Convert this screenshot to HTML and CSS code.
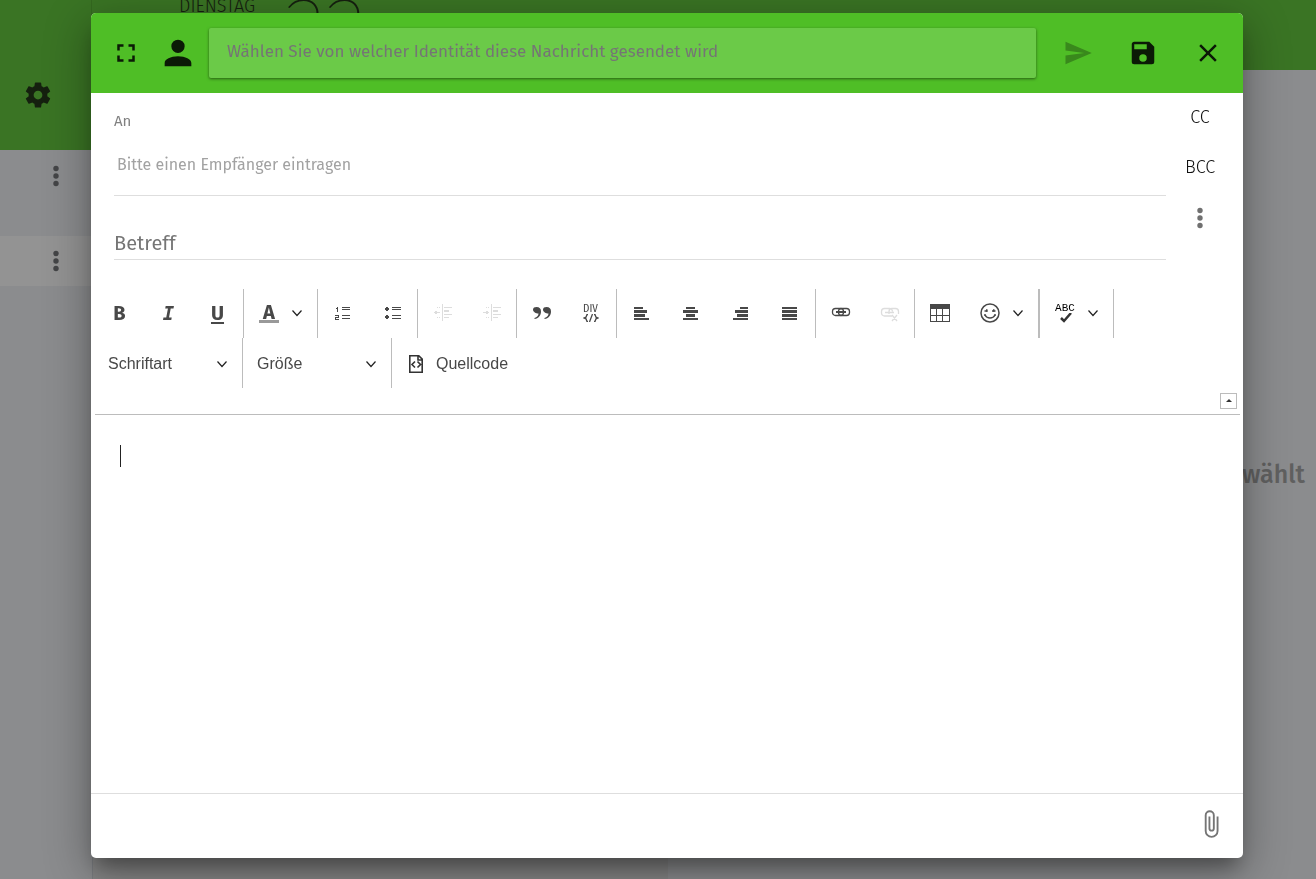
FILE: index.html
```html
<!DOCTYPE html>
<html lang="de">
<head>
<meta charset="utf-8">
<meta name="viewport" content="width=device-width, initial-scale=1">
<title>Neue Nachricht</title>
<link rel="stylesheet" href="styles.css">
</head>
<body>
<svg class="defs" aria-hidden="true">
  <symbol id="chevron" viewBox="0 0 12 12"><path d="M1.500 3.500 6 8.500 10.500 3.500" fill="none" stroke="#222" stroke-width="1.200"/></symbol>
  <symbol id="dots" viewBox="0 0 6 22"><circle cx="3" cy="3.500" r="2.700"/><circle cx="3" cy="11" r="2.700"/><circle cx="3" cy="18.500" r="2.700"/></symbol>
</svg>
<div class="app">
  <aside class="side">
    <div class="side-head">
      <button class="plain" aria-label="Einstellungen"><svg class="i30" viewBox="0 0 24 24" fill="#15200f"><path d="M12,15.5A3.5,3.5 0 0,1 8.5,12A3.5,3.5 0 0,1 12,8.5A3.5,3.5 0 0,1 15.5,12A3.5,3.5 0 0,1 12,15.5M19.43,12.97C19.47,12.65 19.5,12.33 19.5,12C19.5,11.67 19.47,11.34 19.43,11L21.54,9.37C21.73,9.22 21.78,8.95 21.66,8.73L19.66,5.27C19.54,5.05 19.27,4.96 19.05,5.05L16.56,6.05C16.04,5.66 15.5,5.32 14.87,5.07L14.5,2.42C14.46,2.18 14.25,2 14,2H10C9.75,2 9.54,2.18 9.5,2.42L9.13,5.07C8.5,5.32 7.96,5.66 7.44,6.05L4.95,5.05C4.73,4.96 4.46,5.05 4.34,5.27L2.34,8.73C2.21,8.95 2.27,9.22 2.46,9.37L4.57,11C4.53,11.34 4.5,11.67 4.5,12C4.5,12.33 4.53,12.65 4.57,12.97L2.46,14.63C2.27,14.78 2.21,15.05 2.34,15.27L4.34,18.73C4.46,18.95 4.73,19.03 4.95,18.95L7.44,17.94C7.96,18.34 8.5,18.68 9.13,18.93L9.5,21.58C9.54,21.82 9.75,22 10,22H14C14.25,22 14.46,21.82 14.5,21.58L14.87,18.93C15.5,18.67 16.04,18.34 16.56,17.94L19.05,18.95C19.27,19.03 19.54,18.95 19.66,18.73L21.66,15.27C21.78,15.05 21.73,14.78 21.54,14.63L19.43,12.97Z"/></svg></button>
    </div>
    <div class="side-row first"><button class="plain" aria-label="Kontomenü"><svg class="dots" fill="#444547"><use href="#dots"/></svg></button></div>
    <div class="side-row active"><button class="plain" aria-label="Ordnermenü"><svg class="dots" fill="#444547"><use href="#dots"/></svg></button></div>
  </aside>
  <div class="main">
    <header class="main-head"><span class="day">DIENSTAG</span><span class="date">22</span></header>
    <div class="panes"><div class="list"></div><div class="detail">wählt</div></div>
  </div>
</div>

<div class="overlay">
<form class="dialog" role="dialog" aria-label="Nachricht verfassen">
  <header class="bar">
    <button type="button" class="plain" aria-label="Vollbild"><svg class="i30" viewBox="0 0 24 24" fill="#0b1a06"><path d="M5,5H10V7H7V10H5V5M14,5H19V10H17V7H14V5M17,14H19V19H14V17H17V14M10,17V19H5V14H7V17H10Z"/></svg></button>
    <svg class="i40" viewBox="0 0 24 24" fill="#0b1a06" aria-hidden="true"><path d="M12,4A4,4 0 0,1 16,8A4,4 0 0,1 12,12A4,4 0 0,1 8,8A4,4 0 0,1 12,4M12,14C16.42,14 20,15.79 20,18V20H4V18C4,15.79 7.580,14 12,14Z"/></svg>
    <input class="identity" type="text" aria-label="Identität" placeholder="Wählen Sie von welcher Identität diese Nachricht gesendet wird">
    <div class="actions">
      <button type="button" class="plain" aria-label="Senden" disabled><svg class="i30" viewBox="0 0 24 24" fill="#39891c"><path d="M2,21L23,12L2,3V10L17,12L2,14V21Z"/></svg></button>
      <button type="button" class="plain" aria-label="Speichern"><svg class="i30" viewBox="0 0 24 24" fill="#0b1a06"><path d="M15,9H5V5H15M12,19A3,3 0 0,1 9,16A3,3 0 0,1 12,13A3,3 0 0,1 15,16A3,3 0 0,1 12,19M17,3H5C3.89,3 3,3.9 3,5V19A2,2 0 0,0 5,21H19A2,2 0 0,0 21,19V7L17,3Z"/></svg></button>
      <button type="button" class="plain" aria-label="Schließen"><svg class="i30" viewBox="0 0 24 24" fill="#0b1a06"><path d="M19,6.41L17.59,5L12,10.59L6.41,5L5,6.41L10.590,12L5,17.59L6.41,19L12,13.41L17.59,19L19,17.59L13.41,12L19,6.41Z"/></svg></button>
    </div>
  </header>

  <section class="addresses">
    <div class="fields">
      <label class="to-label" for="to">An</label>
      <input class="to" id="to" type="text" placeholder="Bitte einen Empfänger eintragen">
      <input class="subject" type="text" aria-label="Betreff" placeholder="Betreff">
    </div>
    <div class="extra">
      <button type="button" class="plain">CC</button>
      <button type="button" class="plain">BCC</button>
      <button type="button" class="plain more" aria-label="Mehr"><svg class="dots" fill="#707070"><use href="#dots"/></svg></button>
    </div>
  </section>

  <section class="editor">
    <div class="toolbox">
      <div class="tools">
        <div class="group">
          <button type="button" class="tool letter">B</button>
          <button type="button" class="tool letter italic">I</button>
          <button type="button" class="tool letter"><u>U</u></button>
        </div>
        <div class="group">
          <button type="button" class="tool combo" aria-label="Textfarbe"><span class="color letter">A</span><svg class="i12"><use href="#chevron"/></svg></button>
        </div>
        <div class="group">
          <button type="button" class="tool" aria-label="Nummerierte Liste"><svg class="i20" viewBox="0 0 20 20" fill="#484848" shape-rendering="crispEdges"><path d="M9 4h8v1H9zM9 6h8v1H9zM9 12h8v1H9zM9 15h8v1H9zM4 4h1v5H4zM3 5h1v1H3zM2 12h4v3H3v1h3v1H2v-3h3v-1H2z"/></svg></button>
          <button type="button" class="tool" aria-label="Aufzählung"><svg class="i20" viewBox="0 0 20 20" fill="#484848"><path d="M10 4h9v1h-9zM10 6h9v1h-9zM10 12h9v1h-9zM10 15h9v1h-9zM4 4h2v1h1v2H6v1H4V7H3V5h1zM4 12h2v1h1v2H6v1H4v-1H3v-2h1z" shape-rendering="crispEdges"/></svg></button>
        </div>
        <div class="group tight">
          <button type="button" class="tool" aria-label="Einzug verkleinern" disabled><svg class="i20" viewBox="0 0 20 20" fill="#ddd" shape-rendering="crispEdges"><path d="M9 1h1v17H9zM11 4h8v1h-8zM11 7h5v2h-5zM11 11h8v1h-8zM11 14h5v1h-5zM4 4h1v1H4zM6 4h1v1H6zM4 14h1v1H4zM6 14h1v1H6zM1 9h6v1H1zM2 8h2v3H2z"/></svg></button>
          <button type="button" class="tool" aria-label="Einzug vergrößern" disabled><svg class="i20" viewBox="0 0 20 20" fill="#ddd" shape-rendering="crispEdges"><path d="M9 1h1v17H9zM11 4h8v1h-8zM11 7h5v2h-5zM11 11h8v1h-8zM11 14h5v1h-5zM4 4h1v1H4zM6 4h1v1H6zM4 14h1v1H4zM6 14h1v1H6zM1 9h6v1H1zM4 8h2v3H4z"/></svg></button>
        </div>
        <div class="group">
          <button type="button" class="tool" aria-label="Zitatblock"><svg class="i20" viewBox="0 0 20 20" fill="#484848"><path d="M1 6.500C1 4.800 2.500 4 4.500 4 7.500 4 9 5.700 9 8.500 9 12.500 6.500 15.500 2.500 16v-1c2.500-.8 4-2.500 4-4.500-2.500 0-5.500-1.500-5.500-4zM11 6.500C11 4.800 12.500 4 14.500 4 17.500 4 19 5.700 19 8.500c0 4-2.500 7-6.500 7.500v-1c2.500-.8 4-2.500 4-4.500-2.500 0-5.500-1.500-5.500-4z"/></svg></button>
          <button type="button" class="tool div-tool" aria-label="DIV-Container"><span>DIV</span><svg class="div-code" viewBox="0 0 16 8" fill="none" stroke="#484848" stroke-width="1.300"><path d="M5 .5H4L3 3.200 1 4l2 .8L4 7.500h1M11 .5h1l1 2.700 2 .8-2 .8-1 2.700h-1M9.500 0 6.500 8"/></svg></button>
        </div>
        <div class="group wide">
          <button type="button" class="tool" aria-label="Linksbündig"><svg class="i20" viewBox="0 0 20 20" fill="#484848" shape-rendering="crispEdges"><path d="M2 4h9v2H2zM2 7h13v3H2zM2 11h11v3H2zM2 15h15v2H2z"/></svg></button>
          <button type="button" class="tool" aria-label="Zentriert"><svg class="i20" viewBox="0 0 20 20" fill="#484848" shape-rendering="crispEdges"><path d="M5 4h9v2H5zM2 7h15v3H2zM5 11h9v3H5zM2 15h15v2H2z"/></svg></button>
          <button type="button" class="tool" aria-label="Rechtsbündig"><svg class="i20" viewBox="0 0 20 20" fill="#484848" shape-rendering="crispEdges"><path d="M10 4h8v2h-8zM5 7h13v3H5zM7 11h11v3H7zM3 15h15v2H3z"/></svg></button>
          <button type="button" class="tool" aria-label="Blocksatz"><svg class="i20" viewBox="0 0 20 20" fill="#484848" shape-rendering="crispEdges"><path d="M3 4h15v2H3zM3 7h15v3H3zM3 11h15v3H3zM3 15h15v2H3z"/></svg></button>
        </div>
        <div class="group tight">
          <button type="button" class="tool" aria-label="Link einfügen"><svg class="i20" viewBox="0 0 20 20" fill="none" stroke="#484848" stroke-width="1.300"><rect x="1.500" y="5.500" width="11" height="7" rx="3"/><rect x="7.500" y="5.500" width="11" height="7" rx="3"/><path d="M5 9h10" stroke-width="2"/></svg></button>
          <button type="button" class="tool" aria-label="Link entfernen" disabled><svg class="i20" viewBox="0 0 20 20" fill="none" stroke="#ddd" stroke-width="1.300"><path d="M12 13H4.500a3 3 0 0 1-3-3V8.500a3 3 0 0 1 3-3h5a3 3 0 0 1 3 3M9 11V8.500a3 3 0 0 1 3-3h3.500a3 3 0 0 1 3 3V11M5 9.500h9M12 12l5 6M17 12l-5 6"/></svg></button>
        </div>
        <div class="group">
          <button type="button" class="tool" aria-label="Tabelle"><svg class="i20" viewBox="0 0 20 20" fill="#484848" fill-rule="evenodd" shape-rendering="crispEdges"><path d="M0 1h20v18H0zM1 6v6h5V6zM7 6v6h5V6zM13 6v6h6V6zM1 13v5h5v-5zM7 13v5h5v-5zM13 13v5h6v-5z"/></svg></button>
          <button type="button" class="tool combo wide" aria-label="Smiley"><svg class="i20" viewBox="0 0 20 20" fill="none" stroke="#484848" stroke-width="1.500"><circle cx="10" cy="10" r="9"/><path d="M4.500 8h3M12 8h3.500M5 12c1 2 2.500 3 5 3s4-1 5-3M4 12h2M14 12h2"/><path d="M6 7.500h1.500M13 7.500h1.500" stroke-width="2.500"/></svg><svg class="i12"><use href="#chevron"/></svg></button>
        </div>
        <div class="group framed">
          <button type="button" class="tool combo" aria-label="Rechtschreibprüfung"><span class="abc">ABC<svg viewBox="0 0 14 10"><path d="M3 5 6 8 13 0" fill="none" stroke="#333" stroke-width="2.500"/></svg></span><svg class="i12"><use href="#chevron"/></svg></button>
        </div>
      </div>
      <div class="tools">
        <div class="pick"><select aria-label="Schriftart"><option>Schriftart</option></select><svg class="i12"><use href="#chevron"/></svg></div>
        <div class="pick"><select aria-label="Größe"><option>Größe</option></select><svg class="i12"><use href="#chevron"/></svg></div>
        <button type="button" class="source"><svg class="i20" viewBox="0 0 20 20" fill="none" stroke="#333" stroke-width="1.600"><path d="M3.800 1.800h9l3.400 3.400v13H3.800zM9 7.500l-3 3 3 3M11.500 7.500l3 3-3 3M12 2v4h4"/></svg>Quellcode</button>
      </div>
      <div class="collapse-row"><button type="button" class="collapse" aria-label="Werkzeugleiste einklappen"><svg viewBox="0 0 6 3" fill="#333"><path d="M3 0 6 3H0z"/></svg></button></div>
    </div>
    <div class="text" contenteditable="true" role="textbox" aria-label="Nachricht"><span class="caret"></span></div>
  </section>

  <footer class="foot">
    <button type="button" class="plain" aria-label="Datei anhängen"><svg class="i30" viewBox="0 0 24 24" fill="#757575"><path d="M16.5,6V17.5A4,4 0 0,1 12.5,21.5A4,4 0 0,1 8.500,17.5V5A2.5,2.5 0 0,1 11,2.5A2.5,2.5 0 0,1 13.5,5V15.5A1,1 0 0,1 12.5,16.5A1,1 0 0,1 11.5,15.5V6H10V15.5A2.5,2.5 0 0,0 12.5,18A2.5,2.5 0 0,0 15,15.5V5A4,4 0 0,0 11,1A4,4 0 0,0 7,5V17.5A5.5,5.5 0 0,0 12.5,23A5.5,5.5 0 0,0 18,17.5V6H16.5Z"/></svg></button>
  </footer>
</form>
</div>
</body>
</html>
```

FILE: styles.css
```css
* { box-sizing: border-box; }
html, body { height: 100%; }
body { margin: 0; overflow: hidden; font-family: "Fira Sans", "Noto Sans", sans-serif; color: #111; }
button, input, select { font: inherit; color: inherit; margin: 0; }
svg { display: block; flex: none; }
.defs { position: absolute; width: 0; height: 0; }
.plain { display: flex; align-items: center; justify-content: center; padding: 0; border: 0; background: none; }
.i12 { width: 12px; height: 12px; }
.i20 { width: 20px; height: 20px; }
.i30 { width: 30px; height: 30px; }
.i40 { width: 40px; height: 40px; }
.dots { width: 6px; height: 22px; }

.app { display: flex; height: 100%; background: #8b8c8e; }
.side { flex: none; width: 92px; }
.side-head { height: 150px; padding: 80px 0 0 23px; background: #3a7424; border-right: 1px solid #34691f; }
.side-row { display: flex; justify-content: flex-end; padding: 14px 33px 0 0; height: 50px; }
.side-row .plain { height: 22px; }
.side-row.first { height: 86px; padding-top: 15px; }
.side-row.active { background: #939393; }
.main { flex: 1; min-width: 0; display: flex; flex-direction: column; border-left: 1px solid #7b7d80; }
.main-head { flex: none; display: flex; gap: 29px; height: 70px; margin-left: -1px; padding-left: 87px; overflow: hidden; background: #3a7424; color: #15200f; font-weight: 300; }
.day { font-size: 18px; line-height: 24px; margin-top: -6px; }
.date { font-size: 88px; line-height: 80px; margin-top: -10px; font-weight: 200; }
.panes { flex: 1; display: flex; }
.list { flex: 0 0 47%; background: #868686; }
.detail { flex: 1; display: flex; align-items: center; justify-content: flex-end; padding-right: 11px; font-size: 25px; font-weight: 500; color: #606060; }

.overlay { position: fixed; inset: 0; display: flex; padding: 13px 73px 21px 91px; }
.dialog { flex: 1; min-width: 0; display: flex; flex-direction: column; overflow: hidden; border-radius: 5px; background: #fff; box-shadow: 0 14px 18px -6px rgba(0,0,0,.3), 0 12px 44px 4px rgba(0,0,0,.3); }
.bar { flex: none; display: flex; align-items: center; height: 80px; padding: 0 3px 0 20px; background: #4fbe26; }
.bar .i40 { margin: 0 11px 0 17px; }
.identity { flex: 1; min-width: 0; height: 50px; padding: 0 18px 3px; border: 0; border-radius: 2px; background: #6bca48; font-size: 17px; box-shadow: 0 1px 3px rgba(0,0,0,.5); }
.identity::placeholder { color: #757575; opacity: 1; }
.actions { display: flex; margin-left: 9px; }
.actions .plain { width: 65px; height: 50px; }

.addresses { display: flex; height: 196px; flex: none; }
.fields { flex: 1; min-width: 0; display: flex; flex-direction: column; padding: 18px 0 0 23px; }
.to-label { font-size: 15px; line-height: 20px; color: #808080; }
.to, .subject { width: 100%; border: 0; border-bottom: 1px solid #dedede; outline: 0; background: none; }
.to { height: 65px; padding: 2px 3px 0; font-size: 16px; }
.to::placeholder { color: #a2a2a2; opacity: 1; }
.subject { height: 64px; padding: 30px 0 0; font-size: 20px; }
.subject::placeholder { color: #757575; opacity: 1; }
.extra { flex: none; width: 77px; padding-right: 9px; }
.extra .plain { width: 100%; height: 50px; padding-bottom: 2px; font-size: 18px; font-weight: 300; }
.extra .more { padding-bottom: 0; }

.editor { flex: 1; min-height: 0; display: flex; flex-direction: column; margin: 0 3px 0 4px; font-family: "Liberation Sans", Arial, sans-serif; color: #484848; }
.toolbox { flex: none; border-bottom: 1px solid #bcbcbc; }
.tools { display: flex; flex-wrap: wrap; }
.group { display: flex; height: 49px; padding-right: 1px; border-right: 1px solid #bcbcbc; }
.group.tight { padding-right: 0; }
.group.wide { padding-right: 2px; }
.group.framed { border-left: 1px solid #bcbcbc; }
.tool { display: flex; align-items: center; justify-content: center; width: 49px; padding: 0 0 1px; border: 0; background: none; }
.combo { width: 72px; justify-content: flex-start; gap: 12px; padding-left: 15px; }
.combo.wide { width: 73px; padding-left: 16px; }
.letter { font-family: "Fira Sans", "Open Sans", sans-serif; font-size: 20px; line-height: 22px; font-weight: 700; color: #484848; }
.letter.italic { font-family: "DejaVu Sans Mono", monospace; font-size: 19px; font-style: italic; }
.tool u { text-decoration-thickness: 2px; text-underline-offset: 2px; }
.color { width: 20px; height: 20px; line-height: 18px; border-bottom: 3px solid #999; }
.div-tool { flex-direction: column; font-family: "Liberation Sans Narrow", "Fira Sans Condensed", "DejaVu Sans Condensed", sans-serif; font-size: 11px; line-height: 10px; }
.div-code { width: 16px; height: 8px; }
.abc { width: 20px; font-family: "Liberation Mono", monospace; font-size: 11px; line-height: 10px; color: #000; }
.abc svg { width: 14px; height: 10px; margin-left: 3px; }
.pick { position: relative; width: 148px; height: 50px; border-right: 1px solid #bcbcbc; }
.pick + .pick { width: 149px; }
.pick select { width: 100%; height: 100%; padding: 0 13px; border: 0; appearance: none; background: none; font-size: 16px; }
.pick + .pick select { padding-left: 14px; }
.pick .i12 { position: absolute; right: 14px; top: 20px; pointer-events: none; }
.source { display: flex; align-items: center; gap: 10px; height: 50px; padding: 1px 14px 0; border: 0; background: none; font-size: 16px; }
.collapse-row { display: flex; justify-content: flex-end; padding: 5px 3px; }
.collapse { display: flex; justify-content: center; width: 17px; height: 16px; padding: 5px 0 0; border: 1px solid #bcbcbc; background: #fff; }
.collapse svg { width: 6px; height: 3px; }
.text { flex: 1; padding: 30px 25px; outline: 0; }
.caret { display: block; width: 1px; height: 22px; background: #222; }

.foot { flex: none; display: flex; align-items: center; justify-content: flex-end; height: 65px; padding: 0 17px 4px 0; border-top: 1px solid #dedede; }
```
